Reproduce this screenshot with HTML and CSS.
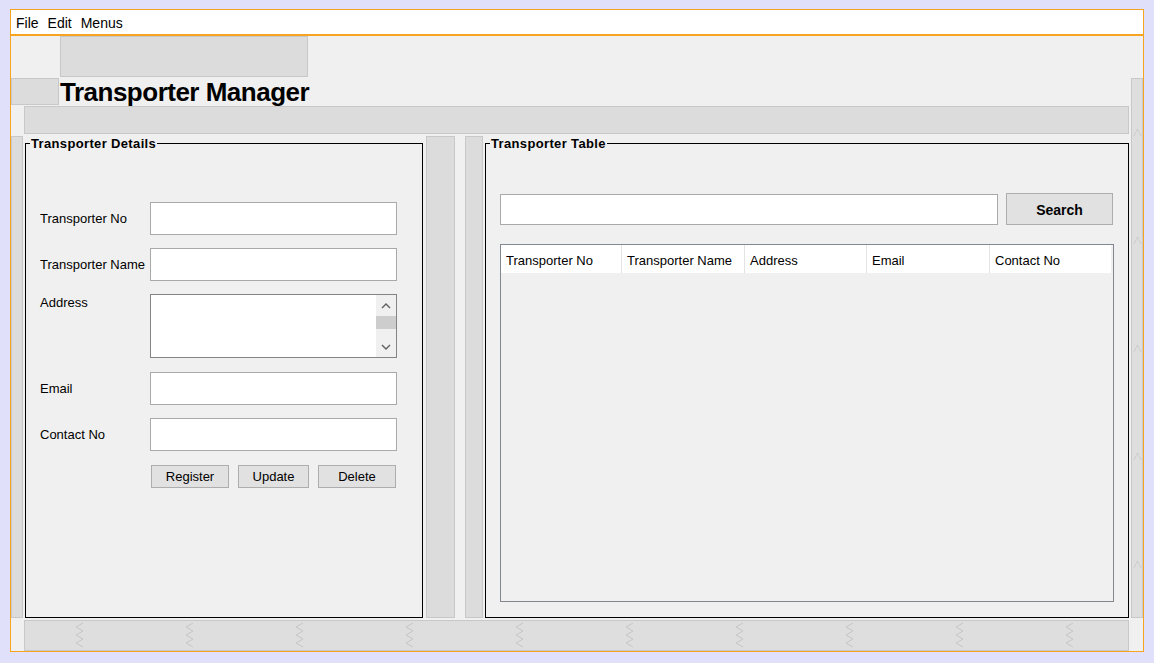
FILE: index.html
```html
<!DOCTYPE html>
<html lang="en">
<head>
<meta charset="utf-8">
<title>Transporter Manager</title>
<link rel="stylesheet" href="styles.css">
</head>
<body>
<div class="frame">
  <div class="menubar">
    <span class="menu-item">File</span>
    <span class="menu-item">Edit</span>
    <span class="menu-item">Menus</span>
  </div>
  <div class="content">
    <div class="gbox topbox"></div>
    <div class="gbox smallbox"></div>
    <h1 class="title">Transporter Manager</h1>
    <div class="gbox rstrip">
      <svg class="chev" viewBox="0 0 10 10"><polyline points="1,9 5,1 9,9"/></svg>
      <svg class="chev" viewBox="0 0 10 10"><polyline points="1,9 5,1 9,9"/></svg>
      <svg class="chev" viewBox="0 0 10 10"><polyline points="1,9 5,1 9,9"/></svg>
      <svg class="chev" viewBox="0 0 10 10"><polyline points="1,9 5,1 9,9"/></svg>
      <svg class="chev" viewBox="0 0 10 10"><polyline points="1,9 5,1 9,9"/></svg>
    </div>
    <div class="gbox bar"></div>

    <div class="main">
      <div class="gbox vstrip vstrip-left"></div>

      <fieldset class="panel panel-left">
        <legend>Transporter Details</legend>
        <div class="form">
          <label class="lbl">Transporter No</label>
          <input class="field" type="text">
          <label class="lbl">Transporter Name</label>
          <input class="field" type="text">
          <label class="lbl lbl-top">Address</label>
          <div class="textarea">
            <div class="ta-text"></div>
            <div class="ta-scroll">
              <div class="ta-btn"><svg viewBox="0 0 10 6"><polyline points="1,5 5,1 9,5"/></svg></div>
              <div class="ta-thumb"></div>
              <div class="ta-track"></div>
              <div class="ta-btn"><svg viewBox="0 0 10 6"><polyline points="1,1 5,5 9,1"/></svg></div>
            </div>
          </div>
          <label class="lbl">Email</label>
          <input class="field" type="text">
          <label class="lbl">Contact No</label>
          <input class="field" type="text">
          <div class="btnrow">
            <button class="btn btn-wide">Register</button>
            <button class="btn btn-narrow">Update</button>
            <button class="btn btn-wide">Delete</button>
          </div>
        </div>
      </fieldset>

      <div class="gbox vstrip vstrip-mid1"></div>
      <div class="gbox vstrip vstrip-mid2"></div>

      <fieldset class="panel panel-right">
        <legend>Transporter Table</legend>
        <div class="searchrow">
          <input class="search-field" type="text">
          <button class="btn search-btn">Search</button>
        </div>
        <div class="table">
          <div class="thead">
            <div class="th">Transporter No</div>
            <div class="th">Transporter Name</div>
            <div class="th">Address</div>
            <div class="th">Email</div>
            <div class="th">Contact No</div>
          </div>
        </div>
      </fieldset>
    </div>

    <div class="gbox bottombar">
      <svg class="zig" viewBox="0 0 9 25"><polyline points="8,0 1,4 8,8 1,12 8,16 1,20 8,24"/></svg>
      <svg class="zig" viewBox="0 0 9 25"><polyline points="8,0 1,4 8,8 1,12 8,16 1,20 8,24"/></svg>
      <svg class="zig" viewBox="0 0 9 25"><polyline points="8,0 1,4 8,8 1,12 8,16 1,20 8,24"/></svg>
      <svg class="zig" viewBox="0 0 9 25"><polyline points="8,0 1,4 8,8 1,12 8,16 1,20 8,24"/></svg>
      <svg class="zig" viewBox="0 0 9 25"><polyline points="8,0 1,4 8,8 1,12 8,16 1,20 8,24"/></svg>
      <svg class="zig" viewBox="0 0 9 25"><polyline points="8,0 1,4 8,8 1,12 8,16 1,20 8,24"/></svg>
      <svg class="zig" viewBox="0 0 9 25"><polyline points="8,0 1,4 8,8 1,12 8,16 1,20 8,24"/></svg>
      <svg class="zig" viewBox="0 0 9 25"><polyline points="8,0 1,4 8,8 1,12 8,16 1,20 8,24"/></svg>
      <svg class="zig" viewBox="0 0 9 25"><polyline points="8,0 1,4 8,8 1,12 8,16 1,20 8,24"/></svg>
      <svg class="zig" viewBox="0 0 9 25"><polyline points="8,0 1,4 8,8 1,12 8,16 1,20 8,24"/></svg>
    </div>
  </div>
</div>
</body>
</html>
```
FILE: styles.css
```css
* { box-sizing: border-box; }

body {
  margin: 0;
  background: #e0e0fa;
  font-family: "Liberation Sans", Arial, sans-serif;
  color: #000;
}

.frame {
  margin: 9px 0 0 10px;
  width: 1134px;
  height: 643px;
  border: 1px solid #f7a521;
  background: #f0f0f0;
  display: flex;
  flex-direction: column;
}

.menubar {
  height: 26px;
  background: #fff;
  border-bottom: 2px solid #f7a521;
  display: flex;
  font-size: 14px;
  line-height: 24px;
  padding-left: 1px;
}

.menu-item {
  padding: 1px 5px 0 4px;
}

.content {
  display: grid;
  grid-template-columns: 13px 36px 1071px 12px;
  grid-template-rows: 42px 28px 30px 483px 32px;
}

.gbox {
  background: #dcdcdc;
  border: 1px solid #c8c8c8;
}

.topbox {
  grid-column: 3;
  grid-row: 1;
  width: 248px;
  height: 41px;
}

.smallbox {
  grid-column: 1 / 3;
  grid-row: 2;
  width: 48px;
  height: 27px;
}

.title {
  grid-column: 3;
  grid-row: 2;
  margin: 0;
  font: bold 26px/29px "Liberation Sans", Arial, sans-serif;
  letter-spacing: -0.5px;
  white-space: nowrap;
}

.bar {
  grid-column: 2 / 4;
  grid-row: 3;
  margin-right: 2px;
  height: 28px;
}

.rstrip {
  grid-column: 4;
  grid-row: 2 / 5;
  height: 540px;
  background: #dedede;
  display: flex;
  flex-direction: column;
  align-items: center;
  padding-top: 49px;
  gap: 99px;
}

.chev {
  width: 9px;
  height: 9px;
  fill: none;
  stroke: #c9c9c9;
  stroke-width: 1;
}

.main {
  grid-column: 1 / 4;
  grid-row: 4;
  display: flex;
  align-items: flex-start;
}

.vstrip {
  height: 482px;
  flex: none;
}

.vstrip-left { width: 12px; margin-right: 2px; }
.vstrip-mid1 { width: 29px; margin-left: 3px; margin-right: 10px; }
.vstrip-mid2 { width: 18px; margin-right: 2px; }

.panel {
  margin: 0;
  padding: 0 0 0 4px;
  border: 1px solid #000;
  height: 482px;
  min-width: 0;
  flex: none;
}

.panel legend {
  padding: 0 1px;
  font: bold 13px/15px "Liberation Sans", Arial, sans-serif;
  letter-spacing: 0.35px;
}

.panel-left { width: 398px; }
.panel-right { width: 644px; }

.form {
  display: grid;
  grid-template-columns: 110px 247px;
  grid-template-rows: 33px 33px 65px 33px 33px 24px;
  row-gap: 13px;
  margin-top: 51px;
  padding-left: 10px;
}

.lbl {
  font-size: 13px;
  line-height: 16px;
  align-self: center;
  white-space: nowrap;
}

.lbl-top { align-self: start; padding-top: 1px; }

.field {
  width: 247px;
  height: 33px;
  margin: 0;
  padding: 0 4px;
  border: 1px solid #a9a9a9;
  background: #fff;
  outline: none;
}

.textarea {
  width: 247px;
  height: 64px;
  border: 1px solid #848484;
  background: #fff;
  display: flex;
}

.ta-text { flex: 1; }

.ta-scroll {
  width: 20px;
  background: #f0f0f0;
  display: flex;
  flex-direction: column;
}

.ta-btn {
  height: 21px;
  display: flex;
  align-items: center;
  justify-content: center;
}

.ta-btn svg {
  width: 10px;
  height: 6px;
  fill: none;
  stroke: #606060;
  stroke-width: 1.4;
}

.ta-thumb {
  height: 13px;
  background: #cdcdcd;
}

.ta-track { flex: 1; }

.btnrow {
  grid-column: 2;
  align-self: end;
  display: flex;
  gap: 9px;
  padding-left: 1px;
}

.btn {
  margin: 0;
  padding: 0;
  height: 23px;
  border: 1px solid #adadad;
  background: #e1e1e1;
  font: 13px/21px "Liberation Sans", Arial, sans-serif;
  color: #000;
}

.btn-wide { width: 78px; }
.btn-narrow { width: 71px; }

.searchrow {
  display: flex;
  align-items: center;
  gap: 8px;
  height: 32px;
  margin-top: 42px;
  padding-left: 10px;
}

.search-field {
  width: 498px;
  height: 31px;
  margin: 0;
  padding: 0 4px;
  border: 1px solid #a9a9a9;
  background: #fff;
  outline: none;
}

.search-btn {
  width: 107px;
  height: 32px;
  font: bold 14px/30px "Liberation Sans", Arial, sans-serif;
  padding-top: 1px;
}

.table {
  margin: 19px 0 0 10px;
  width: 614px;
  height: 358px;
  border: 1px solid #828790;
  background: #f0f0f0;
}

.thead {
  display: grid;
  grid-template-columns: 120px 122px 121px 122px 121px;
  column-gap: 1px;
  width: 610px;
  height: 28px;
  background: #e3e3e3;
}

.th {
  background: #fff;
  padding: 3px 0 0 5px;
  font-size: 13px;
  line-height: 25px;
  white-space: nowrap;
}

.bottombar {
  grid-column: 2 / 4;
  grid-row: 5;
  margin: 1px 2px 0 0;
  height: 31px;
  background: #dedede;
  display: flex;
  align-items: center;
  padding-left: 50px;
  gap: 101px;
}

.zig {
  width: 9px;
  height: 25px;
  fill: none;
  stroke: #c6c6c6;
  stroke-width: 1;
}
```
